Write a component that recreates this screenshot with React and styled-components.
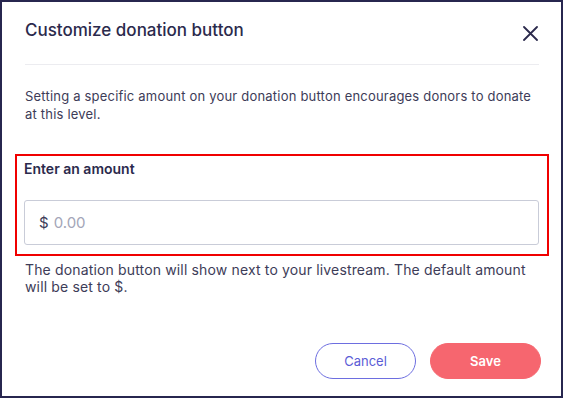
import React from "react"
import styled, { createGlobalStyle } from "styled-components"

const GlobalStyle = createGlobalStyle`
  body {
    margin: 0;
    background: #ffffff;
    font-family: "Inter", "Open Sans", sans-serif;
  }
`

const Frame = styled.div`
  box-sizing: border-box;
  width: 563px;
  height: 398px;
  border: 2px solid #27264f;
  background: #ffffff;
  display: flex;
  flex-direction: column;
  padding: 0 22px 0 23px;
`

const Header = styled.div`
  display: flex;
  align-items: center;
  justify-content: space-between;
  padding-top: 16px;
  height: 24px;
  box-sizing: content-box;
`

const Title = styled.h2`
  margin: 0;
  font-size: 17px;
  font-weight: 500;
  color: #2b2a4c;
  line-height: 24px;
`

const CloseButton = styled.button`
  border: none;
  background: none;
  padding: 0;
  width: 18px;
  height: 18px;
  display: flex;
  align-items: center;
  justify-content: center;
  margin-top: 6px;
  cursor: pointer;
`

const Divider = styled.hr`
  border: none;
  border-top: 1px solid #ececf0;
  margin: 22px 0 0;
`

const Text = styled.p`
  margin: ${(p) => p.$top || 0}px 0 0;
  font-size: ${(p) => p.$size || 13}px;
  line-height: ${(p) => (p.$size ? 17 : 18)}px;
  letter-spacing: ${(p) => (p.$size ? 0.15 : 0.2)}px;
  color: #3d3c58;
`

const Highlight = styled.div`
  margin: 31px -10px 0 -10px;
  border: 2px solid #f00000;
  padding: 4px 8px 9px 7px;
  display: flex;
  flex-direction: column;
  gap: 22px;
`

const Label = styled.label`
  font-size: 14px;
  font-weight: 600;
  line-height: 18px;
  color: #2b2a4c;
`

const InputBox = styled.div`
  box-sizing: border-box;
  height: 45px;
  border: 1px solid #c9ccd8;
  border-radius: 3px;
  display: flex;
  align-items: center;
  padding-left: 14px;
  gap: 5px;
  font-size: 15px;
`

const Currency = styled.span`
  color: #3d3c58;
`

const AmountInput = styled.input`
  border: none;
  outline: none;
  flex: 1;
  font: inherit;
  color: #2b2a4c;
  padding: 0;
  &::placeholder {
    color: #a3a5b8;
  }
`

const Footer = styled.div`
  margin: auto -2px 0 0;
  padding-bottom: 17px;
  display: flex;
  justify-content: flex-end;
  gap: 14px;
`

const Button = styled.button`
  box-sizing: border-box;
  height: 36px;
  width: ${(p) => p.$width}px;
  border-radius: 18px;
  font-family: inherit;
  font-size: 13px;
  font-weight: ${(p) => (p.$primary ? 600 : 400)};
  cursor: pointer;
  border: 1px solid ${(p) => (p.$primary ? "#f6666f" : "#6d6ee0")};
  background: ${(p) => (p.$primary ? "#f6666f" : "#ffffff")};
  color: ${(p) => (p.$primary ? "#ffffff" : "#5b5cd6")};
`

export default function App() {
  return (
    <>
      <GlobalStyle />
      <Frame>
        <Header>
          <Title>Customize donation button</Title>
          <CloseButton aria-label="Close">
            <svg width="15" height="15" viewBox="0 0 15 15">
              <path d="M1 1L14 14M14 1L1 14" stroke="#2b2a4c" strokeWidth="1.8" strokeLinecap="round" />
            </svg>
          </CloseButton>
        </Header>
        <Divider />
        <Text $top={22}>
          Setting a specific amount on your donation button encourages donors to donate at this level.
        </Text>
        <Highlight>
          <Label>Enter an amount</Label>
          <InputBox>
            <Currency>$</Currency>
            <AmountInput placeholder="0.00" />
          </InputBox>
        </Highlight>
        <Text $top={5} $size={14}>
          The donation button will show next to your livestream. The default amount will be set to $.
        </Text>
        <Footer>
          <Button $width={101}>Cancel</Button>
          <Button $width={111} $primary>Save</Button>
        </Footer>
      </Frame>
    </>
  )
}
